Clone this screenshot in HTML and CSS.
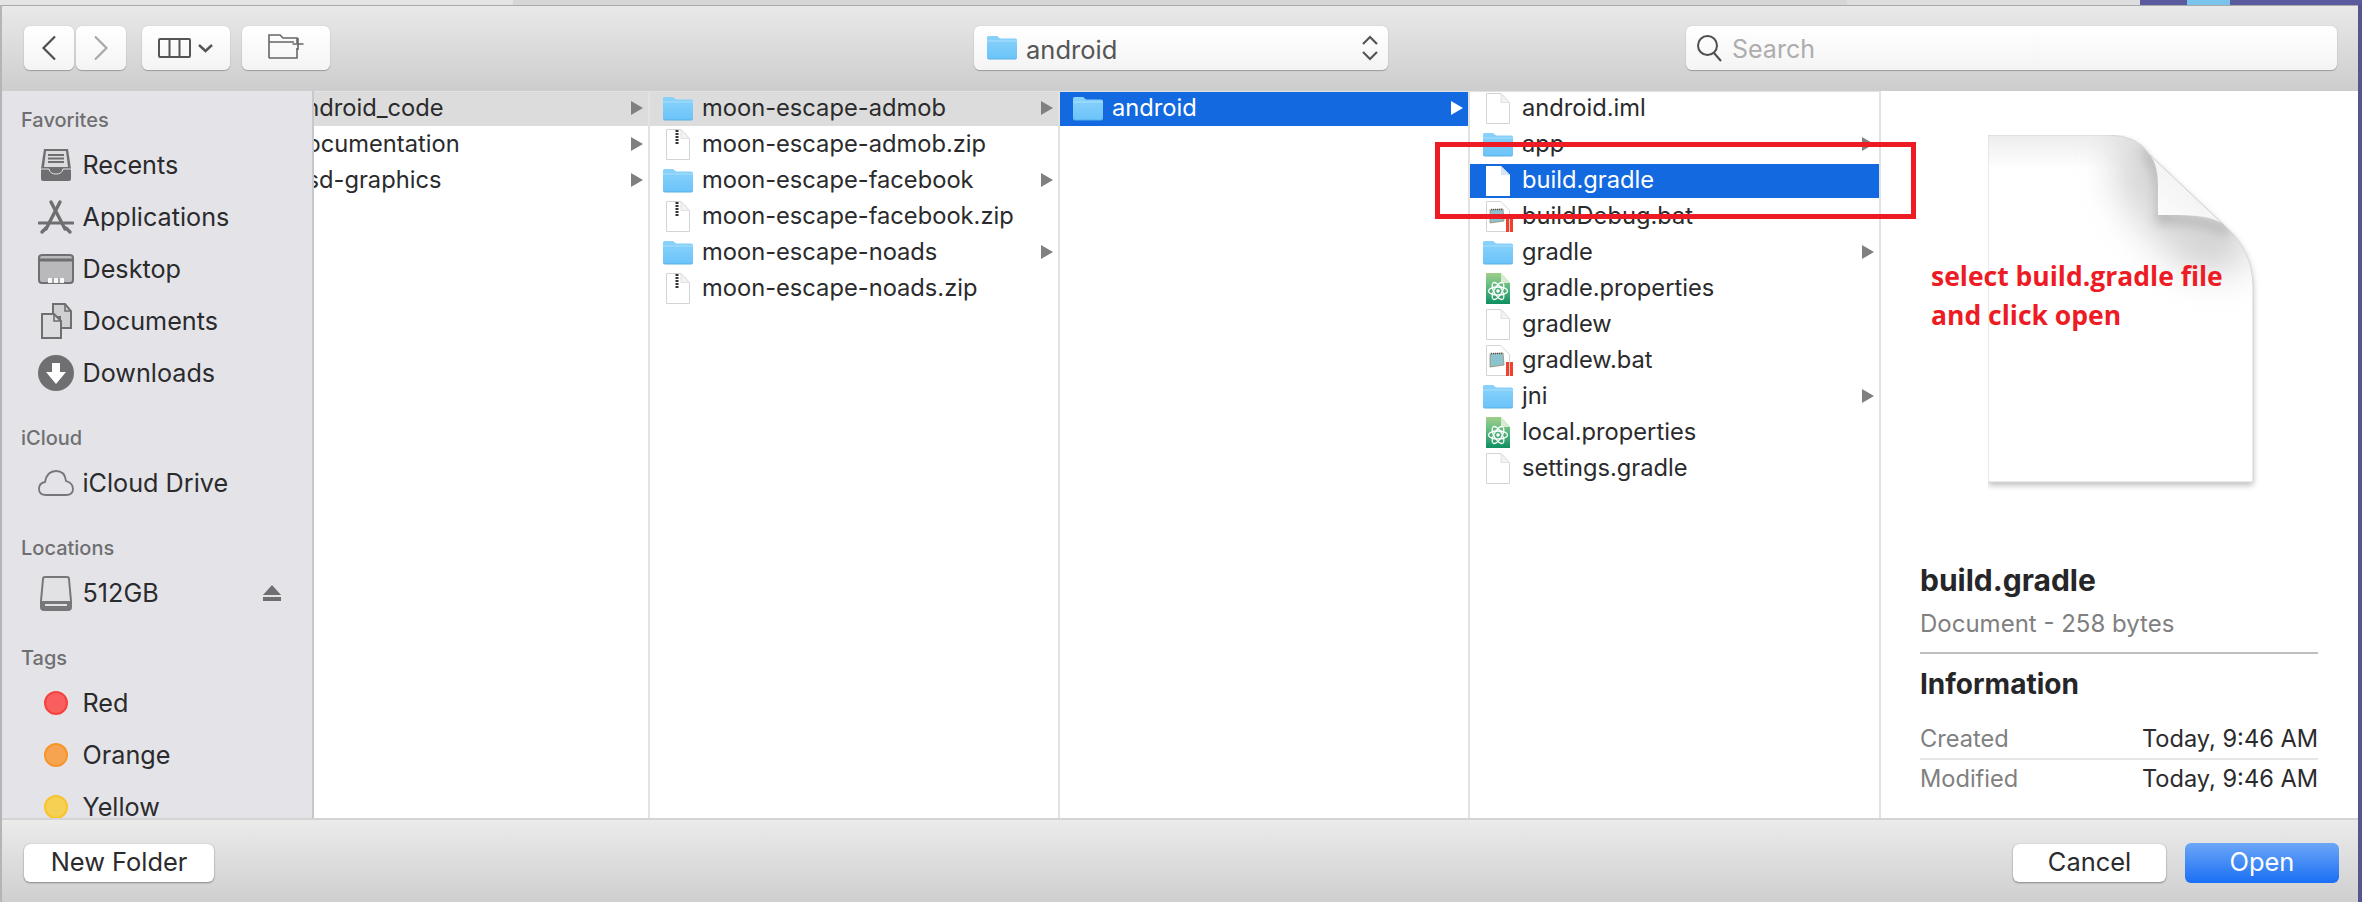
FILE: index.html
```html
<!DOCTYPE html>
<html lang="en">
<head>
<meta charset="utf-8">
<title>Open</title>
<link rel="stylesheet" href="styles.css">
</head>
<body>
<svg class="defs" width="0" height="0" aria-hidden="true">
  <defs>
    <linearGradient id="fg" x1="0" y1="0" x2="0" y2="1"><stop offset="0" stop-color="#8ad2fb"/><stop offset="1" stop-color="#6cc4f9"/></linearGradient>
    <linearGradient id="gg" x1="0" y1="0" x2="0" y2="1"><stop offset="0" stop-color="#9fd08a"/><stop offset=".45" stop-color="#5eb97f"/><stop offset="1" stop-color="#0f8f60"/></linearGradient>
    <symbol id="folder" viewBox="0 0 30 32">
      <path d="M0 6.5Q0 4.5 2 4.5H10L13 7H28Q30 7 30 9V25Q30 27.5 28 27.5H2Q0 27.5 0 25Z" fill="#5bb0e2"/>
      <path d="M0 6Q0 4 2 4H10L13 6.5H28Q30 6.5 30 8.5V24.5Q30 26.5 28 26.5H2Q0 26.5 0 24.5Z" fill="url(#fg)"/>
      <path d="M0 9H30" stroke="#a9dffc" stroke-width="1"/>
    </symbol>
    <symbol id="doc" viewBox="0 0 30 32">
      <path d="M3.5.5H18L26.5 9.5V30.5H3.5Z" fill="#fff" stroke="#d4d4d4"/>
      <path d="M18 .5V9.5H26.5Z" fill="#f2f2f2" stroke="#dcdcdc" stroke-width=".8"/>
    </symbol>
    <symbol id="docsel" viewBox="0 0 30 32">
      <path d="M3 1H18L27 10V31H3Z" fill="#fff"/>
      <path d="M18 1V10H27Z" fill="#d6e4f7"/>
    </symbol>
    <symbol id="zip" viewBox="0 0 30 32">
      <path d="M3.5.5H18L26.5 9.5V30.5H3.5Z" fill="#fff" stroke="#d4d4d4"/>
      <path d="M18 .5V9.5H26.5Z" fill="#f2f2f2" stroke="#dcdcdc" stroke-width=".8"/>
      <path d="M14 1V16" stroke="#333" stroke-width="3" stroke-dasharray="2 1"/>
    </symbol>
    <symbol id="bat" viewBox="0 0 30 32">
      <path d="M3.5.5H18L26.5 9.5V30.5H3.5Z" fill="#fff" stroke="#d4d4d4"/>
      <path d="M7 9L20 8L21 20L7 22Z" fill="#8cc3cf" stroke="#9c8a6c" stroke-width=".8"/>
      <path d="M8 8.5H20" stroke="#555" stroke-width="1.4" stroke-dasharray="1 1"/>
      <rect x="23" y="17" width="3" height="14" fill="#f2402f"/>
      <rect x="27" y="17" width="3" height="14" fill="#f2402f"/>
    </symbol>
    <symbol id="atom" viewBox="0 0 30 32">
      <path d="M3 0H18L27 10V31H3Z" fill="url(#gg)"/>
      <path d="M18 0V10H27Z" fill="#d6ebd0"/>
      <g fill="none" stroke="#fff" stroke-width="1.3" transform="translate(15 18)">
        <ellipse rx="9.5" ry="4"/>
        <ellipse rx="9.5" ry="4" transform="rotate(60)"/>
        <ellipse rx="9.5" ry="4" transform="rotate(120)"/>
      </g>
      <circle cx="15" cy="18" r="1.8" fill="#fff"/>
    </symbol>
    <linearGradient id="topshade" x1="0" y1="0" x2="0" y2="1"><stop offset="0" stop-color="#dedede"/><stop offset="1" stop-color="#fff"/></linearGradient>
    <linearGradient id="foldfill" x1="0" y1="1" x2="1" y2="0"><stop offset="0" stop-color="#fff"/><stop offset="1" stop-color="#e9e9e9"/></linearGradient>
    <filter id="blur18" x="-60%" y="-60%" width="220%" height="220%"><feGaussianBlur stdDeviation="20"/></filter>
    <filter id="softline" x="-40%" y="-40%" width="180%" height="180%"><feGaussianBlur stdDeviation="6"/></filter>
    <filter id="pageshadow" x="-10%" y="-10%" width="120%" height="120%"><feDropShadow dx="0" dy="3" stdDeviation="3" flood-color="#000" flood-opacity=".28"/></filter>
    <clipPath id="pageclip"><path d="M0 0H119Q150 0 162 20L236 90Q265 115 265 152V347H0Z"/></clipPath>
  </defs>
</svg>

<div class="desktop">
  <div class="backdrop">
    <span class="bd bd-a"></span><span class="bd bd-b"></span><span class="bd bd-c"></span><span class="bd bd-d"></span><span class="bd bd-e"></span><span class="bd bd-f"></span>
  </div>
  <div class="stage">
    <div class="strip-left"></div>
    <main class="window">
      <header class="toolbar">
        <button class="btn nav" aria-label="Back"><svg width="16" height="26" viewBox="0 0 16 26"><path d="M14 1.5L2.5 13L14 24.5" fill="none" stroke="#4f4f4f" stroke-width="2.2"/></svg></button>
        <button class="btn nav nav-next" aria-label="Forward"><svg width="16" height="26" viewBox="0 0 16 26"><path d="M2 1.5L13.5 13L2 24.5" fill="none" stroke="#a9a9a9" stroke-width="2.2"/></svg></button>
        <button class="btn view" aria-label="View"><svg width="56" height="22" viewBox="0 0 56 22"><g fill="none" stroke="#555" stroke-width="2"><rect x="1" y="2" width="31" height="18" rx="1"/><path d="M11.5 2V20M21.5 2V20"/><path d="M41 8L47.5 14L54 8" stroke-width="2.4"/></g></svg></button>
        <button class="btn newf" aria-label="New folder"><svg width="36" height="26" viewBox="0 0 36 26"><g fill="none" stroke="#666" stroke-width="1.6"><path d="M1 25V2H12L15 5H29V10M1 9H26M29 15V25H1"/><path d="M30 5V17M24.5 11H35.5" stroke="#666"/></g></svg></button>
        <div class="popup"><svg class="ic" width="30" height="32"><use href="#folder"/></svg><span class="popup-name">android</span>
          <svg class="updown" width="18" height="26" viewBox="0 0 18 26"><path d="M2 9L9 2L16 9M2 17L9 24L16 17" fill="none" stroke="#555" stroke-width="2.2"/></svg></div>
        <div class="search"><svg width="27" height="28" viewBox="0 0 27 28"><g fill="none" stroke="#4e4e4e" stroke-width="2"><circle cx="11.5" cy="11.5" r="9.5"/><path d="M18 19L25 27"/></g></svg><span class="search-ph">Search</span></div>
      </header>

      <div class="body">
        <nav class="sidebar">
          <h4 class="side-label">Favorites</h4>
          <div class="side-row"><svg class="side-ic" width="36" height="36" viewBox="0 0 36 36"><path d="M6 2H30L33 22V32Q33 34 31 34H5Q3 34 3 32V22Z" fill="#6f6f72"/><path d="M8 4H28L30 20H6Z" fill="#dcdcdf"/><path d="M10 8H26M10 11.5H26M10 15H26" stroke="#6f6f72" stroke-width="1.8"/><path d="M3 22H11Q12 27 18 27Q24 27 25 22H33" fill="none" stroke="#e4e4e8" stroke-width="1"/></svg>Recents</div>
          <div class="side-row"><svg class="side-ic" width="36" height="36" viewBox="0 0 36 36"><g stroke="#6f6f72" fill="none" stroke-linecap="round"><path d="M13 3L27 30" stroke-width="3.4"/><path d="M22 3L8 30" stroke-width="3.4"/><path d="M1 24H35" stroke-width="3"/><path d="M4 33L8 29M32 33L28 29" stroke-width="3.4"/></g></svg>Applications</div>
          <div class="side-row"><svg class="side-ic" width="36" height="36" viewBox="0 0 36 36"><rect x="1" y="4" width="34" height="28" rx="3" fill="#b9b9bc" stroke="#6f6f72" stroke-width="2"/><path d="M1 9H35" stroke="#6f6f72" stroke-width="3"/><path d="M10 27H26V32H10Z" fill="#fff" opacity=".9"/><path d="M15 27V32M21 27V32" stroke="#8d8d90" stroke-width="1.5"/></svg>Desktop</div>
          <div class="side-row"><svg class="side-ic" width="36" height="36" viewBox="0 0 36 36"><path d="M15 1H27L33 8V25H22V14H15Z" fill="#cfcfd2" stroke="#6f6f72" stroke-width="2"/><path d="M4 11H16L23 18V35H4Z" fill="#dcdcdf" stroke="#6f6f72" stroke-width="2"/><path d="M16 11V18H23" fill="none" stroke="#6f6f72" stroke-width="1.6"/><path d="M27 1V8H33" fill="none" stroke="#6f6f72" stroke-width="1.6"/></svg>Documents</div>
          <div class="side-row"><svg class="side-ic" width="36" height="36" viewBox="0 0 36 36"><circle cx="18" cy="18" r="18" fill="#6f6f72"/><path d="M14 8H22V17H28L18 29L8 17H14Z" fill="#fff"/></svg>Downloads</div>

          <h4 class="side-label side-gap">iCloud</h4>
          <div class="side-row"><svg class="side-ic" width="36" height="36" viewBox="0 0 36 36"><path d="M8 30Q1 30 1 24Q1 18 7 17Q9 6 18 6Q27 6 28 16Q35 18 35 24Q35 30 28 30Z" fill="#e4e4e8" stroke="#77777a" stroke-width="1.8"/></svg>iCloud Drive</div>

          <h4 class="side-label side-gap">Locations</h4>
          <div class="side-row"><svg class="side-ic" width="36" height="36" viewBox="0 0 36 36"><path d="M7 2Q5 2 5 4L3 26V32Q3 35 6 35H30Q33 35 33 32V26L31 4Q31 2 29 2Z" fill="#e2e2e5" stroke="#77777a" stroke-width="2"/><path d="M3 26H33V32Q33 35 30 35H6Q3 35 3 32Z" fill="#77777a"/><path d="M7 29H29V31H7Z" fill="#e2e2e5"/></svg>512GB<svg class="eject" width="18" height="16" viewBox="0 0 18 16"><path d="M9 0L18 10H0Z" fill="#6f6f72"/><rect y="12" width="18" height="4" fill="#6f6f72"/></svg></div>

          <h4 class="side-label side-gap">Tags</h4>
          <div class="side-row"><span class="dot"><span class="dot-i dot-red"></span></span>Red</div>
          <div class="side-row"><span class="dot"><span class="dot-i dot-orange"></span></span>Orange</div>
          <div class="side-row"><span class="dot"><span class="dot-i dot-yellow"></span></span>Yellow</div>
        </nav>

        <section class="col col-1">
          <div class="row sel-gray"><span class="name clip">android_code</span><i class="arrow"></i></div>
          <div class="row"><span class="name clip">documentation</span><i class="arrow"></i></div>
          <div class="row"><span class="name clip">psd-graphics</span><i class="arrow"></i></div>
        </section>

        <section class="col col-2">
          <div class="row sel-gray"><svg class="ic" width="30" height="32"><use href="#folder"/></svg><span class="name">moon-escape-admob</span><i class="arrow"></i></div>
          <div class="row"><svg class="ic" width="30" height="32"><use href="#zip"/></svg><span class="name">moon-escape-admob.zip</span></div>
          <div class="row"><svg class="ic" width="30" height="32"><use href="#folder"/></svg><span class="name">moon-escape-facebook</span><i class="arrow"></i></div>
          <div class="row"><svg class="ic" width="30" height="32"><use href="#zip"/></svg><span class="name">moon-escape-facebook.zip</span></div>
          <div class="row"><svg class="ic" width="30" height="32"><use href="#folder"/></svg><span class="name">moon-escape-noads</span><i class="arrow"></i></div>
          <div class="row"><svg class="ic" width="30" height="32"><use href="#zip"/></svg><span class="name">moon-escape-noads.zip</span></div>
        </section>

        <section class="col col-3">
          <div class="row sel-blue"><svg class="ic" width="30" height="32"><use href="#folder"/></svg><span class="name">android</span><i class="arrow"></i></div>
        </section>

        <section class="col col-4">
          <div class="row"><svg class="ic" width="30" height="32"><use href="#doc"/></svg><span class="name">android.iml</span></div>
          <div class="row"><svg class="ic" width="30" height="32"><use href="#folder"/></svg><span class="name">app</span><i class="arrow"></i></div>
          <div class="row sel-blue"><svg class="ic" width="30" height="32"><use href="#docsel"/></svg><span class="name">build.gradle</span></div>
          <div class="row"><svg class="ic" width="30" height="32"><use href="#bat"/></svg><span class="name">buildDebug.bat</span></div>
          <div class="row"><svg class="ic" width="30" height="32"><use href="#folder"/></svg><span class="name">gradle</span><i class="arrow"></i></div>
          <div class="row"><svg class="ic" width="30" height="32"><use href="#atom"/></svg><span class="name">gradle.properties</span></div>
          <div class="row"><svg class="ic" width="30" height="32"><use href="#doc"/></svg><span class="name">gradlew</span></div>
          <div class="row"><svg class="ic" width="30" height="32"><use href="#bat"/></svg><span class="name">gradlew.bat</span></div>
          <div class="row"><svg class="ic" width="30" height="32"><use href="#folder"/></svg><span class="name">jni</span><i class="arrow"></i></div>
          <div class="row"><svg class="ic" width="30" height="32"><use href="#atom"/></svg><span class="name">local.properties</span></div>
          <div class="row"><svg class="ic" width="30" height="32"><use href="#doc"/></svg><span class="name">settings.gradle</span></div>
        </section>

        <aside class="preview">
          <svg class="page" width="275" height="358" viewBox="0 0 275 358">
            <path d="M0 0H119Q150 0 162 20L236 90Q265 115 265 152V347H0Z" fill="#fff" filter="url(#pageshadow)"/>
            <g clip-path="url(#pageclip)">
              <rect width="265" height="34" fill="url(#topshade)" opacity=".55"/>
              <path d="M158 -10L178 20V76L260 84V130L210 135Q150 100 125 30Z" fill="#9a9a9a" filter="url(#blur18)" opacity=".5"/>
              <path d="M158 14Q176 40 174 84Q205 80 242 96" fill="none" stroke="#8a8a8a" stroke-width="9" opacity=".55" filter="url(#softline)"/>
            </g>
            <path d="M162 20Q170 30 170 50V80H190Q225 80 236 90Z" fill="url(#foldfill)"/>
            <path d="M162 20L236 90" fill="none" stroke="#cfcfcf" stroke-width="1"/>
            <path d="M162 20Q150 0 119 0H0V347H265V152Q265 115 236 90" fill="none" stroke="#d6d6d6" stroke-width="1"/>
          </svg>
          <h2 class="pv-title">build.gradle</h2>
          <p class="pv-sub">Document - 258 bytes</p>
          <div class="pv-rule"></div>
          <h3 class="pv-head">Information</h3>
          <div class="pv-row pv-row-first"><span class="pv-k">Created</span><span class="pv-v">Today, 9:46 AM</span></div>
          <div class="pv-row"><span class="pv-k">Modified</span><span class="pv-v">Today, 9:46 AM</span></div>
        </aside>
      </div>

      <footer class="footer">
        <button class="fbtn">New Folder</button>
        <button class="fbtn fbtn-cancel">Cancel</button>
        <button class="fbtn fbtn-open">Open</button>
      </footer>

      <div class="note">select build.gradle file<br>and click open</div>
      <div class="marker"></div>
    </main>
    <div class="strip-right"></div>
  </div>
</div>
</body>
</html>
```
FILE: styles.css
```css
* { box-sizing: border-box; }
html, body { margin: 0; padding: 0; }
body { background: #fff; font-family: Inter, "Liberation Sans", sans-serif; color: #2b2b2d; overflow: hidden; }
.defs { position: absolute; }
.desktop { width: 2362px; height: 902px; display: flex; flex-direction: column; overflow: hidden; }

.backdrop { height: 5px; display: flex; flex: none; }
.bd { display: block; height: 100%; }
.bd-a { width: 513px; background: #e4e4e4; }
.bd-b { width: 1334px; background: #d6d6d6; }
.bd-c { width: 293px; background: #dedede; }
.bd-d { width: 47px; background: #5b5a9e; }
.bd-e { width: 43px; background: #7cc3ec; }
.bd-f { flex: 1; background: #5b5a9e; }

.stage { flex: 1; display: flex; min-height: 0; }
.strip-left { width: 2px; background: #b5b5b5; flex: none; }
.strip-right { width: 4px; background: #55558f; flex: none; }
.window { width: 2356px; display: flex; flex-direction: column; position: relative; }

.toolbar { height: 86px; flex: none; display: flex; align-items: flex-start; padding: 20px 21px 0 22px; border-top: 1px solid #aaa; background: linear-gradient(180deg, #e9e9e9 0%, #cdcdcd 100%); }
.btn { height: 44px; border: 0; padding: 0; border-radius: 6px; background: linear-gradient(#fff, #f4f4f4); box-shadow: 0 1px 1px rgba(0,0,0,.25), 0 0 1px rgba(0,0,0,.25); display: flex; align-items: center; justify-content: center; flex: none; }
.nav { width: 50px; }
.nav-next { margin-left: 2px; }
.view { width: 88px; margin-left: 16px; }
.newf { width: 88px; margin-left: 12px; padding-bottom: 4px; }
.popup { width: 414px; height: 44px; margin-left: 644px; border-radius: 6px; background: linear-gradient(#fff, #f4f4f4); box-shadow: 0 1px 1px rgba(0,0,0,.25), 0 0 1px rgba(0,0,0,.25); display: flex; align-items: center; padding: 0 9px 0 13px; flex: none; }
.popup-name { margin-left: 9px; font-size: 25.5px; color: #555; padding-top: 2px; }
.updown { margin-left: auto; }
.search { width: 651px; height: 44px; margin-left: auto; border-radius: 6px; background: linear-gradient(#fff, #f4f4f4); box-shadow: 0 1px 1px rgba(0,0,0,.25), 0 0 1px rgba(0,0,0,.25); display: flex; align-items: center; padding-left: 10px; flex: none; }
.search-ph { margin-left: 9px; font-size: 25px; color: #adadad; padding-top: 2px; }

.body { flex: 1; display: flex; min-height: 0; background: #fff; }
.sidebar { width: 312px; flex: none; padding-top: 10px; background: #e4e4e8; border-right: 2px solid #c8c8ca; overflow: hidden; }
.side-label { margin: 0; height: 38px; padding-left: 19px; display: flex; align-items: center; font-size: 20px; font-weight: 500; color: #6f6f72; }
.side-gap { margin-top: 20px; }
.side-row { height: 52px; display: flex; align-items: center; padding-left: 36px; font-size: 25.2px; color: #2b2b2d; }
.side-ic { margin-right: 8.5px; flex: none; }
.eject { margin-left: auto; margin-right: 31px; }
.dot { width: 36px; margin-right: 8.5px; display: flex; justify-content: center; flex: none; }
.dot-i { width: 24px; height: 24px; border-radius: 50%; border: 2px solid; display: block; }
.dot-red { background: #f95f5f; border-color: #f4423f; }
.dot-orange { background: #f6a44f; border-color: #f7952a; }
.dot-yellow { background: #f6d054; border-color: #f8c42c; }

.col { flex: none; overflow: hidden; border-right: 2px solid #e2e2e2; border-top: 1px solid #e2e2e2; }
.col-1 { width: 336px; }
.col-2 { width: 410px; }
.col-3 { width: 410px; }
.col-4 { width: 411px; }
.row { height: 34px; margin-bottom: 2px; display: flex; align-items: center; padding: 0 5px 3px 13px; font-size: 23.7px; white-space: nowrap; }
.ic { flex: none; align-self: flex-start; margin-top: 1px; }
.popup .ic { align-self: center; margin-top: 0; }
.name { margin-left: 9px; }
.clip { margin-left: -35px; }
.arrow { margin-left: auto; width: 0; height: 0; border-left: 12px solid #808080; border-top: 7.5px solid transparent; border-bottom: 7.5px solid transparent; flex: none; }
.sel-gray { background: #dcdcdc; }
.sel-blue { background: #1369df; color: #fff; }
.sel-blue .arrow { border-left-color: #fff; }

.preview { flex: 1; padding: 44px 40px 0 39px; display: flex; flex-direction: column; }
.page { margin-left: 68px; flex: none; }
.pv-title { margin: 69px 0 0; font-size: 30px; line-height: 36px; font-weight: 700; color: #262628; }
.pv-sub { margin: 11px 0 0; font-size: 24px; line-height: 30px; color: #808080; }
.pv-rule { height: 2px; background: #bfbfbf; margin-top: 13px; flex: none; }
.pv-head { margin: 14px 0 0; font-size: 28px; line-height: 32px; font-weight: 700; color: #262628; }
.pv-row { display: flex; justify-content: space-between; font-size: 23.6px; line-height: 38px; height: 40px; }
.pv-row-first { margin-top: 19.5px; border-bottom: 2px solid #e6e6e6; }
.pv-k { color: #808080; }
.pv-v { color: #2b2b2d; }

.footer { height: 84px; flex: none; display: flex; align-items: flex-start; padding: 24px 19px 0 22px; border-top: 2px solid #d4d4d4; background: linear-gradient(180deg, #ebebeb 0%, #cfcfcf 100%); }
.fbtn { height: 38px; width: 190px; border: 0; border-radius: 6px; background: #fff; box-shadow: 0 1px 2px rgba(0,0,0,.35), 0 0 1px rgba(0,0,0,.3); font: 400 25.4px Inter, "Liberation Sans", sans-serif; color: #2b2b2d; padding: 0 0 4px; flex: none; }
.fbtn-cancel { width: 153px; margin-left: auto; }
.fbtn-open { width: 154px; height: 40px; margin-left: 19px; margin-top: -1px; color: #fff; background: linear-gradient(#6ca6f6, #1a6ff5); box-shadow: none; }

.note { position: absolute; left: 1929px; top: 252px; font-family: "Open Sans", "Noto Sans", sans-serif; font-weight: 700; font-size: 26.5px; line-height: 39px; color: #ed1c24; white-space: nowrap; }
.marker { position: absolute; left: 1433px; top: 137px; width: 481px; height: 77px; border: 5px solid #ed1c24; }
```
